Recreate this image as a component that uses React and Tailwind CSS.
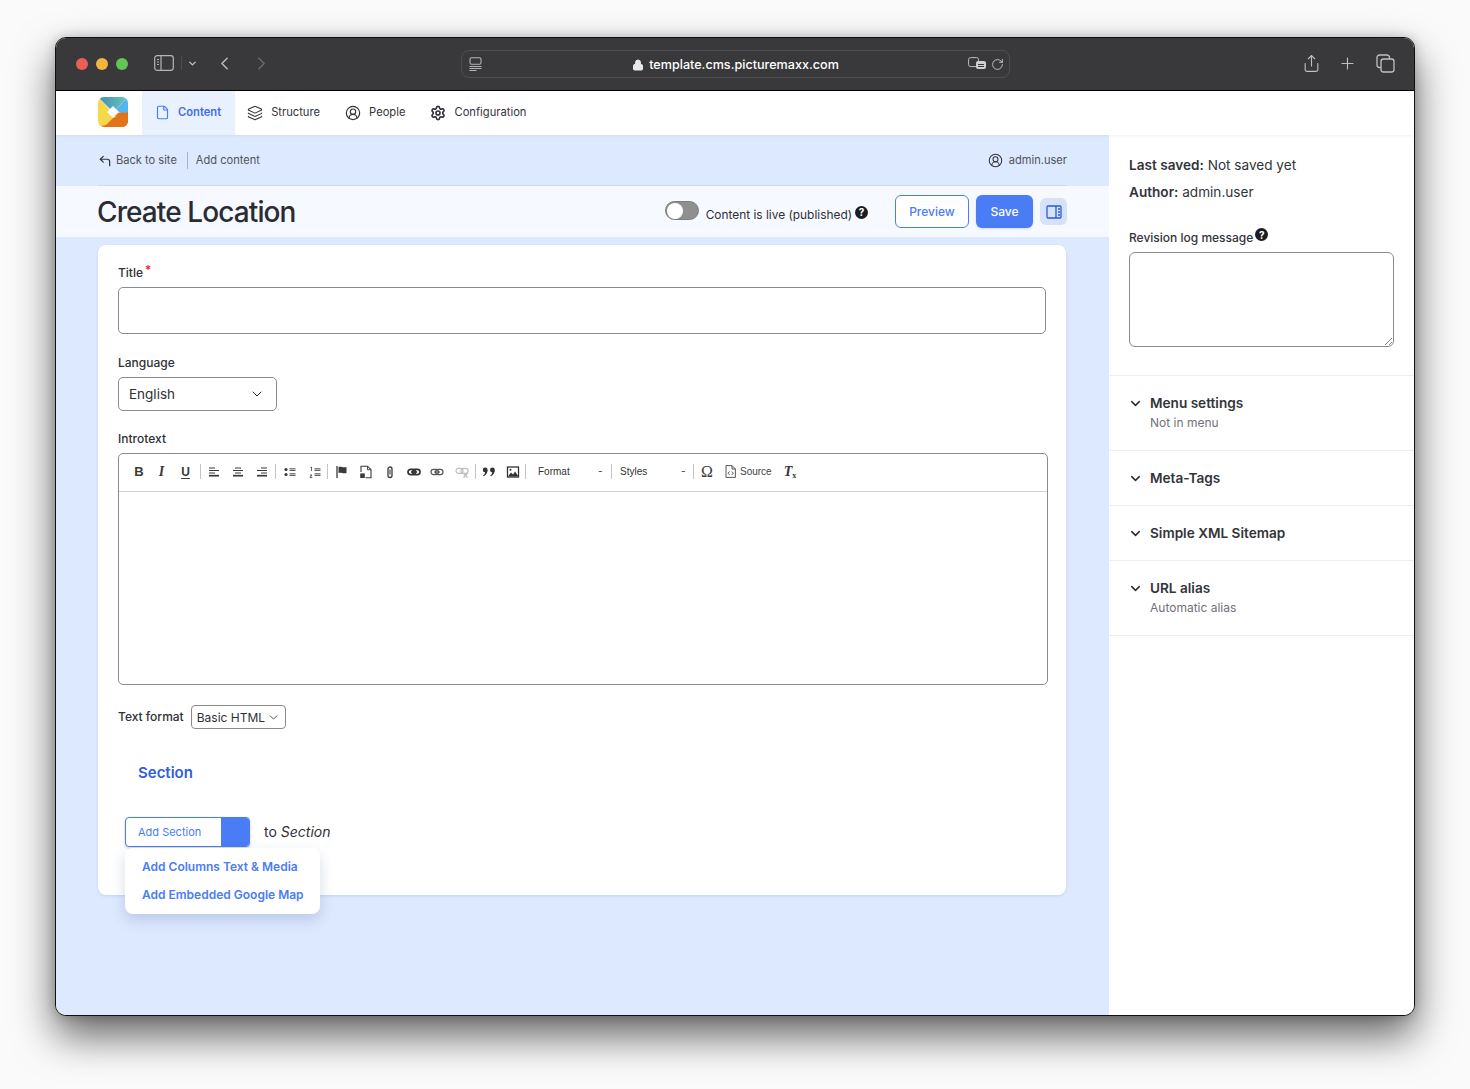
import React from "react";
import { ChevronDown, ChevronLeft, ChevronRight, Lock, RotateCw, Share, Plus, CornerUpLeft, File, Layers, CircleUserRound, Settings } from "lucide-react";

const Help = ({ cls = "" }) => (
  <span className={`inline-flex h-[13px] w-[13px] items-center justify-center rounded-full bg-[#1c1c1f] text-[10px] font-bold leading-none text-white ${cls}`}>?</span>
);

const NavItem = ({ icon, label, active, cls = "" }) => (
  <div className={`flex h-full items-center gap-[8px] pb-[1px] ${active ? "bg-[#e9f0fe] pl-[13px] pr-[14px] font-semibold text-[#3f6fe8]" : "pr-[13px] text-[#33343a]"} ${cls}`}>
    {icon}
    <span className="text-[11.2px] leading-none">{label}</span>
  </div>
);

const Sep = () => <span className="mx-px h-[15px] w-px shrink-0 bg-[#c4c4c4]" />;
const T = ({ children, w }) => (
  <span className={`flex h-[16px] shrink-0 items-center justify-center text-[#3a3a3a] ${w}`}>{children}</span>
);
const I = ({ children, c = "#3a3a3a" }) => (
  <svg width="14" height="14" viewBox="0 0 14 14" fill="none" stroke={c} strokeWidth="1.2">{children}</svg>
);
const Chain = ({ c, sw = 1.5 }) => (
  <I c={c}>
    <rect x="1" y="4.4" width="7.4" height="5.2" rx="2.6" strokeWidth={sw} />
    <rect x="5.6" y="4.4" width="7.4" height="5.2" rx="2.6" strokeWidth={sw} />
    <path d="M4 7h6" strokeWidth={sw} />
  </I>
);

const Toolbar = () => (
  <div className="flex h-[38px] items-center border-b border-[#d1d1d1] pb-[2px] pl-[8px] text-[10px] text-[#333]">
    <T w="w-[24px]"><span className="font-['Liberation_Sans',sans-serif] text-[13px] font-bold leading-none">B</span></T>
    <T w="w-[21px]"><span className="font-['Liberation_Serif',serif] text-[14px] font-bold italic leading-none">I</span></T>
    <T w="w-[27px]"><span className="font-['Liberation_Sans',sans-serif] text-[12px] font-bold leading-none underline underline-offset-2">U</span></T>
    <Sep />
    <T w="w-[24px]"><I><path d="M2 3h6M2 5.5h10M2 8h6" /><path d="M2 10.7h10" strokeWidth="1.7" /></I></T>
    <T w="w-[24px]"><I><path d="M4 3h6M2 5.5h10M4 8h6" /><path d="M2 10.7h10" strokeWidth="1.7" /></I></T>
    <T w="w-[24px]"><I><path d="M6 3h6M2 5.5h10M6 8h6" /><path d="M2 10.7h10" strokeWidth="1.7" /></I></T>
    <Sep />
    <T w="w-[26px]"><I><circle cx="3" cy="4.5" r="1.6" fill="#3a3a3a" stroke="none" /><circle cx="3" cy="9.5" r="1.6" fill="#3a3a3a" stroke="none" /><path d="M6.5 3.8h6M6.5 5.4h6M6.5 8.8h6M6.5 10.4h6" strokeWidth="0.9" /></I></T>
    <T w="w-[23px]"><I><path d="M2.5 2.5l1-.5v4M2 10h2l-2 2.5h2.3" strokeWidth="0.8" /><path d="M6.5 3.8h6M6.5 5.4h6M6.5 8.8h6M6.5 10.4h6" strokeWidth="0.9" /></I></T>
    <Sep />
    <T w="w-[26px]"><I><path d="M2 1v12" strokeWidth="1.3" /><path d="M3.5 2c3-1 4 1 8 0v6c-4 1-5-1-8 0z" fill="#3a3a3a" stroke="none" /></I></T>
    <T w="w-[22px]"><I><path d="M2 7V1.2h6.5L12 4.7v8.1H6.5" strokeWidth="1.1" /><path d="M8.5 1.2v3.5H12" strokeWidth="0.9" /><rect x="1.2" y="8.4" width="4.6" height="4.6" fill="#3a3a3a" stroke="none" /></I></T>
    <T w="w-[25px]"><I><rect x="5" y="2" width="4" height="10.5" rx="2" strokeWidth="1.3" /><path d="M7 4.5v5" strokeWidth="1.1" /></I></T>
    <T w="w-[23px]"><Chain c="#333" sw={1.7} /></T>
    <T w="w-[24px]"><Chain c="#555" sw={1.2} /></T>
    <T w="w-[25px]"><I c="#bdbdbd"><rect x="1" y="3.4" width="7" height="5" rx="2.5" /><rect x="6" y="3.4" width="7" height="5" rx="2.5" /><path d="M8.5 8.5l4 4M12.5 8.5l-4 4" strokeWidth="1.3" /></I></T>
    <Sep />
    <T w="w-[24px]"><svg width="14" height="10" viewBox="0 0 14 10" fill="#333"><circle cx="3.2" cy="3" r="2.4" /><path d="M5.6 3c0 3-1.5 5.2-4 6.2l-.5-.8c1.4-.8 2-2 2-3.4z" /><circle cx="10.4" cy="3" r="2.4" /><path d="M12.8 3c0 3-1.5 5.2-4 6.2l-.5-.8c1.4-.8 2-2 2-3.4z" /></svg></T>
    <T w="w-[23px]"><I c="#333"><rect x="1.5" y="2" width="11" height="10" strokeWidth="1.3" /><path d="M2 11.5l3-4 2 2 2-3 3.5 5z" fill="#333" stroke="none" /><circle cx="4.5" cy="4.8" r="1" fill="#333" stroke="none" /></I></T>
    <Sep />
    <span className="w-[71px] shrink-0 pl-[11px] font-['Liberation_Sans',sans-serif]">Format</span>
    <span className="w-[12px] shrink-0">-</span>
    <Sep />
    <span className="w-[68px] shrink-0 pl-[7px] font-['Liberation_Sans',sans-serif]">Styles</span>
    <span className="w-[11px] shrink-0">-</span>
    <Sep />
    <T w="w-[24px]"><span className="font-['Liberation_Serif',serif] text-[16px] leading-none">Ω</span></T>
    <svg width="11" height="13" viewBox="0 0 11 13" fill="none" stroke="#444" strokeWidth="0.9" className="ml-[6px] mr-[4px] shrink-0">
      <path d="M1 .6h6L10.4 4v8.4H1z" /><path d="M7 .6V4h3.4" /><path d="M4.5 6.5L3 8.2l1.5 1.7M6.8 6.5l1.5 1.7-1.5 1.700" />
    </svg>
    <span className="font-['Liberation_Sans',sans-serif] text-[#444]">Source</span>
    <span className="ml-[12px] font-['Liberation_Serif',serif] text-[14px] font-bold italic leading-none">T<sub className="text-[8px] not-italic">x</sub></span>
  </div>
);

const Acc = ({ title, sub, h }) => (
  <div className={`border-b border-[#eceef1] pl-[19px] ${h}`}>
    <div className="flex h-[55px] flex-col justify-start pt-[19px]">
      <div className="flex items-center gap-[7px]">
        <ChevronDown size={15} strokeWidth={2.3} className="text-[#2c2d33]" />
        <span className="text-[13.6px] font-semibold leading-[17px] text-[#33343a]">{title}</span>
      </div>
      {sub && <div className="mt-[3px] pl-[22px] text-[12px] leading-[16px] text-[#6f727a]">{sub}</div>}
    </div>
  </div>
);

const Logo = () => (
  <svg width="30" height="30" viewBox="0 0 30 30" className="rounded-[6px]">
    <defs>
      <linearGradient id="t" x1="0" y1="0" x2="1" y2="0"><stop offset="0" stopColor="#3f8fb0" /><stop offset="1" stopColor="#6cc5bf" /></linearGradient>
    </defs>
    <rect width="30" height="30" fill="#fff" />
    <polygon points="0,0 30,0 22,8 15,15 8,8" fill="url(#t)" />
    <polygon points="30,0 30,24 22,15 15,15" fill="#55b4ee" />
    <polygon points="30,16 30,30 0,30 15,15" fill="#e2741b" />
    <polygon points="0,0 22,24 0,30" fill="#f6d84a" />
    <polygon points="30,15 30,30 6,30 15,21" fill="#e2741b" />
    <polygon points="15,9 21,15 15,21 9,15" fill="#fff" />
  </svg>
);

export default function App() {
  return (
    <div className="h-[1089px] w-[1470px] overflow-hidden bg-[#fafafa] pl-[55px] pt-[37px] font-['Inter',sans-serif]">
      <div className="flex h-[979px] w-[1360px] flex-col overflow-hidden rounded-[11px] border border-[#111] bg-white shadow-[0_20px_40px_rgba(0,0,0,0.6),0_0_12px_rgba(0,0,0,0.2)]">
        {/* Title bar */}
        <div className="flex h-[53px] shrink-0 items-center border-b border-black bg-[#39393b] pl-[20px] pr-[19px]">
          <div className="flex gap-[8px]">
            <span className="h-[12px] w-[12px] rounded-full bg-[#ec5f57]" />
            <span className="h-[12px] w-[12px] rounded-full bg-[#f2b53e]" />
            <span className="h-[12px] w-[12px] rounded-full bg-[#60c553]" />
          </div>
          <svg width="20" height="16" viewBox="0 0 20 16" fill="none" stroke="#b5b5b6" strokeWidth="1.2" className="ml-[26px] -translate-y-px">
            <rect x="0.7" y="0.7" width="18.6" height="14.6" rx="2.5" />
            <path d="M7 1v14M3 4.5h2M3 7h2M3 9.5h2" />
          </svg>
          <span className="ml-[7px] h-[14px] w-px -translate-y-px bg-[#4c4c4e]" />
          <ChevronDown size={11} strokeWidth={3} className="ml-[5px] -translate-y-px text-[#c0c0c1]" />
          <ChevronLeft size={21} strokeWidth={1.7} className="ml-[16px] -translate-y-px text-[#bcbcbd]" />
          <ChevronRight size={21} strokeWidth={1.7} className="ml-[16px] -translate-y-px text-[#6a6a6c]" />
          <div className="ml-[189px] flex h-[28px] w-[549px] shrink-0 items-center rounded-[8px] border border-[#4e4e50] pl-[7px] pr-[5px]">
            <svg width="13" height="14" viewBox="0 0 13 14" fill="none" stroke="#b5b5b6" strokeWidth="1.1">
              <rect x="1" y="0.8" width="11" height="6.5" rx="1.5" />
              <path d="M0.5 9.5h12M0.5 11.5h12M0.5 13.5h7" />
            </svg>
            <div className="flex flex-1 translate-y-px items-center justify-center gap-[5px] pl-[21px] text-[12.6px] font-medium text-white">
              <Lock size={12} fill="#e8e8e8" strokeWidth={2} className="text-[#e8e8e8]" />
              <span className="leading-none">template.cms.picturemaxx.com</span>
            </div>
            <svg width="19" height="14" viewBox="0 0 19 14" className="mr-[4px]">
              <rect x="0.6" y="0.6" width="10" height="9" rx="2" fill="none" stroke="#bdbdbe" />
              <rect x="8" y="4" width="10" height="8" rx="2" fill="#d0d0d1" />
              <path d="M10 7.5h6M10 9.5h6" stroke="#39393b" />
            </svg>
            <RotateCw size={13} strokeWidth={1.6} className="text-[#d0d0d1]" />
          </div>
          <Share size={19} strokeWidth={1.4} className="ml-auto -translate-y-px text-[#c0c0c1]" />
          <Plus size={19} strokeWidth={1.4} className="ml-[17px] -translate-y-px text-[#c0c0c1]" />
          <svg width="19" height="19" viewBox="0 0 19 19" fill="none" stroke="#c0c0c1" strokeWidth="1.3" className="ml-[19px] -translate-y-px">
            <rect x="5" y="5" width="13" height="13" rx="2.5" />
            <path d="M5 13.5H3.5A2.5 2.5 0 0 1 1 11V3.5A2.5 2.5 0 0 1 3.5 1H11a2.5 2.5 0 0 1 2.5 2.5V5" />
          </svg>
        </div>

        {/* Nav */}
        <div className="z-10 flex h-[44px] shrink-0 items-stretch bg-white pl-[42px] shadow-[0_1px_3px_rgba(0,0,0,0.06)]">
          <div className="mr-[14px] flex items-center pb-[2px]"><Logo /></div>
          <NavItem active label="Content" icon={<File size={15} strokeWidth={1.9} className="text-[#4a7cf6]" />} />
          <NavItem cls="pl-[12px]" label="Structure" icon={<Layers size={16} strokeWidth={1.6} />} />
          <NavItem cls="pl-[12px]" label="People" icon={<CircleUserRound size={16} strokeWidth={1.7} />} />
          <NavItem cls="pl-[12px]" label="Configuration" icon={<Settings size={16} strokeWidth={2.5} />} />
        </div>

        {/* Body */}
        <div className="flex min-h-0 flex-1">
          <div className="relative w-[1053px] shrink-0 bg-[#dde9fe]">
            <div className="mx-[42px] flex h-[51px] items-center border-b border-[#cfdcf0] pt-[1px] text-[11.1px] text-[#50535b]">
              <CornerUpLeft size={14} strokeWidth={2.1} className="mr-[4px] text-[#33343a]" />
              <span>Back to site</span>
              <span className="ml-[10px] mr-[8px] h-[17px] w-px bg-[#a9b3c2]" />
              <span>Add content</span>
              <CircleUserRound size={15} strokeWidth={1.7} className="ml-auto mr-[6px] text-[#33343a]" />
              <span>admin.user</span>
            </div>
            <div className="flex h-[51px] items-center bg-[#f6f9ff] pl-[41px] pr-[42px]">
              <h1 className="text-[28px] font-medium leading-none tracking-[-0.9px] text-[#2b2c31]">Create Location</h1>
              <span className="ml-auto flex h-[19px] w-[34px] -translate-y-[1px] items-center rounded-full border border-[#7c7c7c] bg-[#8f8f8f] pl-[1px]">
                <span className="h-[16px] w-[16px] rounded-full bg-white" />
              </span>
              <span className="ml-[7px] mt-[6px] text-[11.9px] leading-none text-[#2f3036]">Content is live (published)</span>
              <Help cls="ml-[3px] mt-[1px]" />
              <button className="ml-[27px] flex h-[33px] w-[74px] items-center justify-center rounded-[6px] border border-[#4a7cf6] bg-white text-[12px] font-medium text-[#4a7cf6]">Preview</button>
              <button className="ml-[7px] flex h-[33px] w-[57px] items-center justify-center rounded-[6px] bg-[#4a7cf6] text-[12px] font-medium text-white shadow-sm">Save</button>
              <span className="ml-[7px] flex h-[27px] w-[27px] items-center justify-center rounded-[6px] bg-[#d6e2fa]">
                <svg width="16" height="14" viewBox="0 0 16 14" fill="none" stroke="#2a5bd7" strokeWidth="1.3">
                  <rect x="1" y="1" width="14" height="12" rx="1" />
                  <path d="M10 1v12M12 4h2M12 7h2M12 10h2" />
                </svg>
              </span>
            </div>

            <div className="relative mx-[42px] mt-[8px] h-[650px] w-[968px] rounded-[8px] bg-white px-[20px] pt-[20px] shadow-[0_1px_3px_rgba(30,60,120,0.12)]">
              <div className="flex h-[22px] items-start text-[12px] font-medium leading-[15px] text-[#2f3036]">
                Title<span className="ml-[2px] leading-[10px] text-[#e02424]">*</span>
              </div>
              <div className="h-[47px] w-[928px] rounded-[5px] border border-[#8b8b8f]" />
              <div className="mt-[21px] text-[12px] font-medium leading-[15px] text-[#2f3036]">Language</div>
              <div className="mt-[7px] flex h-[34px] w-[159px] items-center justify-between rounded-[5px] border border-[#8b8b8f] pl-[10px] pr-[11px] text-[13.5px] text-[#2f3036]">
                English <ChevronDown size={16} strokeWidth={1.5} />
              </div>
              <div className="mt-[20px] text-[12px] font-medium leading-[15px] text-[#2f3036]">Introtext</div>
              <div className="mt-[7px] h-[232px] w-[930px] rounded-[5px] border border-[#8b8b8f]">
                <Toolbar />
              </div>
              <div className="mt-[20px] flex items-center gap-[7px]">
                <span className="text-[12px] font-medium text-[#2f3036]">Text format</span>
                <span className="flex h-[24px] w-[95px] items-center gap-[2px] rounded-[4px] border border-[#8b8b8f] pl-[5px] pt-[1px] text-[12px] text-[#2f3036]">
                  Basic HTML <ChevronDown size={13} strokeWidth={1.5} />
                </span>
              </div>
              <div className="mt-[34px] pl-[20px] text-[15px] font-semibold leading-[20px] text-[#3060dc]">Section</div>
              <div className="ml-[7px] mt-[34px] flex items-center">
                <div className="flex h-[30px] w-[125px] overflow-hidden rounded-[4px] border border-[#4a7cf6] bg-white shadow-[0_1px_3px_rgba(0,0,0,0.2)]">
                  <span className="flex w-[95px] items-center pl-[12px] text-[11px] text-[#4a7cf6]">Add Section</span>
                  <span className="flex-1 bg-[#4a7cf6]" />
                </div>
                <span className="ml-[14px] -translate-y-px text-[14px] text-[#2f3036]">to <i>Section</i></span>
              </div>
            </div>
            <div className="absolute left-[69px] top-[713px] z-10 flex h-[66px] w-[195px] flex-col justify-center gap-[12px] rounded-[8px] bg-white pl-[17px] text-[12px] font-semibold leading-[16px] text-[#4a7cf6] shadow-[0_6px_14px_rgba(30,60,120,0.18)]">
              <span>Add Columns Text &amp; Media</span>
              <span>Add Embedded Google Map</span>
            </div>
          </div>

          {/* Sidebar */}
          <div className="flex-1 bg-white text-[#33343a]">
            <div className="border-b border-[#eceef1] px-[20px] pb-[28px] pt-[22px]">
              <div className="text-[13.6px] leading-[17px]"><b className="font-semibold">Last saved:</b> Not saved yet</div>
              <div className="mt-[10px] text-[13.6px] leading-[17px]"><b className="font-semibold">Author:</b> admin.user</div>
              <div className="mt-[28px] flex items-start text-[12px] font-medium leading-[17px]">
                Revision log message<Help cls="ml-[2px] mt-[-1px]" />
              </div>
              <div className="relative mt-[6px] h-[95px] w-[265px] rounded-[6px] border border-[#8b8b8f]">
                <svg width="8" height="8" viewBox="0 0 8 8" className="absolute bottom-[1px] right-[1px]" stroke="#666" strokeWidth="0.8">
                  <path d="M1 8L8 1M5 8L8 5" />
                </svg>
              </div>
            </div>
            <Acc title="Menu settings" sub="Not in menu" h="h-[75px]" />
            <Acc title="Meta-Tags" h="h-[55px]" />
            <Acc title="Simple XML Sitemap" h="h-[55px]" />
            <Acc title="URL alias" sub="Automatic alias" h="h-[75px]" />
          </div>
        </div>
      </div>
    </div>
  );
}
